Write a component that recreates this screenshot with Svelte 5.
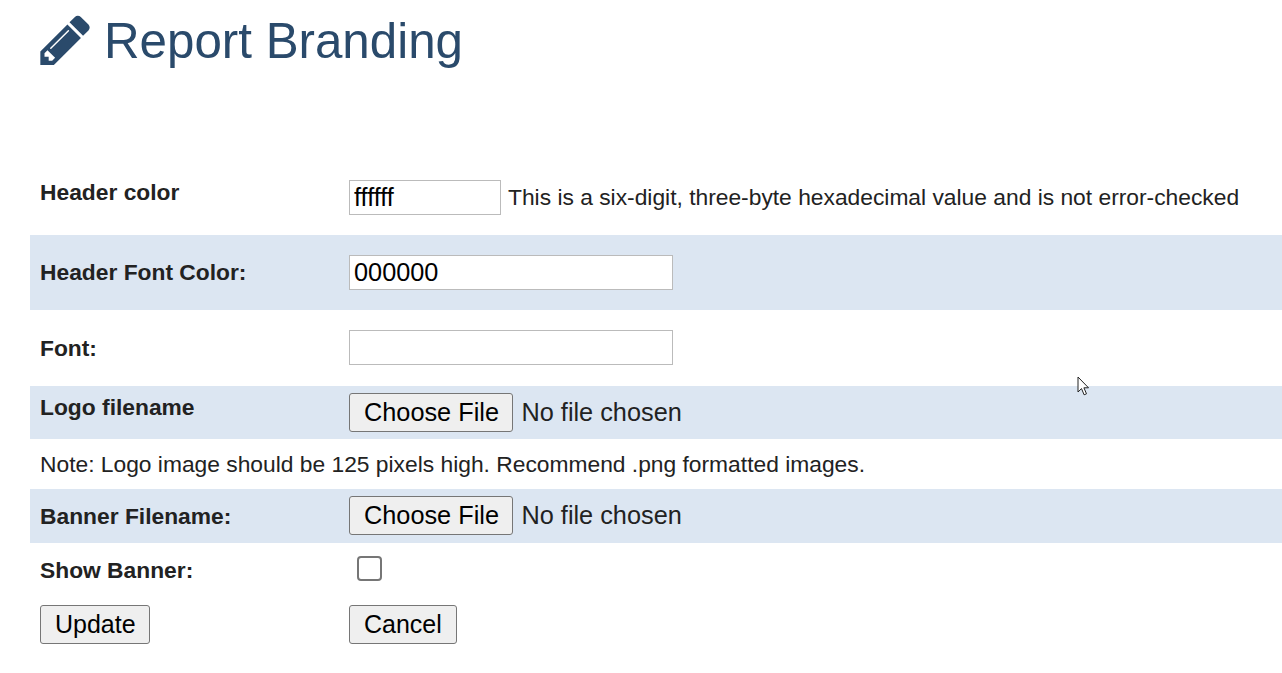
<script>
	let headerColor = $state('ffffff');
	let headerFontColor = $state('000000');
	let font = $state('');
	let showBanner = $state(false);
</script>

<div class="page">
	<h1 class="title">
		<svg class="title-icon" viewBox="128 128 1515 1536" aria-hidden="true">
			<path
				d="M491 1536l91-91-235-235-91 91v107h128v128h107zm523-928q0-22-22-22-10 0-17 7l-542 542q-7 7-7 17 0 22 22 22 10 0 17-7l542-542q7-7 7-17zm-54-192l416 416-832 832h-416v-416zm683 96q0 53-37 90l-166 166-416-416 166-165q36-38 90-38 53 0 91 38l235 234q37 39 37 91z"
			/>
		</svg>
		Report Branding
	</h1>

	<form class="form" onsubmit={(e) => e.preventDefault()}>
		<div class="row row-header">
			<span class="label">Header color</span>
			<div class="value">
				<input class="text short" type="text" bind:value={headerColor} />
				<span class="hint">This is a six-digit, three-byte hexadecimal value and is not error-checked</span>
			</div>
		</div>
		<div class="row row-color shaded centered">
			<span class="label">Header Font Color:</span>
			<div class="value"><input class="text" type="text" bind:value={headerFontColor} /></div>
		</div>
		<div class="row row-font centered">
			<span class="label">Font:</span>
			<div class="value nudge"><input class="text" type="text" bind:value={font} /></div>
		</div>
		<div class="row row-logo shaded">
			<span class="label">Logo filename</span>
			<div class="value"><input class="file" type="file" /></div>
		</div>
		<div class="note">Note: Logo image should be 125 pixels high. Recommend .png formatted images.</div>
		<div class="row row-banner shaded centered">
			<span class="label">Banner Filename:</span>
			<div class="value nudge"><input class="file" type="file" /></div>
		</div>
		<div class="row row-check centered">
			<span class="label">Show Banner:</span>
			<div class="value"><input class="check" type="checkbox" bind:checked={showBanner} /></div>
		</div>
		<div class="row row-actions centered">
			<div class="label"><button class="btn update" type="submit">Update</button></div>
			<div class="value"><button class="btn" type="button">Cancel</button></div>
		</div>
	</form>

	<svg class="pointer" width="14" height="21" viewBox="0 0 14 21" aria-hidden="true">
		<path d="M1 1v15l3.5-3.4 2.6 6.2 2.4-1-2.6-6h4.6z" fill="#fff" stroke="#222" stroke-width="1" />
	</svg>
</div>

<style>
	:global(body) {
		background: #fff;
		font-family: 'Liberation Sans', Arial, sans-serif;
		color: #222;
	}
	.page {
		position: relative;
		padding-left: 30px;
		overflow: hidden;
	}
	.title {
		display: flex;
		align-items: center;
		gap: 14px;
		height: 170px;
		margin: 0;
		padding: 0 0 90px 10px;
		box-sizing: border-box;
		font-size: 49.3px;
		font-weight: 400;
		color: #2a4a6b;
	}
	.title-icon {
		width: 50px;
		height: 50px;
		margin-bottom: 1px;
		fill: #2a4a6b;
	}
	.row {
		display: grid;
		grid-template-columns: 309px 1fr;
		padding-left: 10px;
		box-sizing: border-box;
	}
	.centered {
		align-items: center;
	}
	.shaded {
		background: #dce6f2;
	}
	.row-header {
		height: 65px;
		padding-top: 10px;
		align-items: start;
	}
	.row-color {
		height: 75px;
	}
	.row-font {
		height: 76px;
	}
	.row-logo {
		height: 53px;
		padding-top: 7px;
		align-items: start;
	}
	.row-banner {
		height: 54px;
	}
	.row-check {
		height: 54px;
	}
	.row-actions {
		height: 55px;
	}
	.label {
		font-size: 22.8px;
		font-weight: 700;
	}
	.row-header .label {
		line-height: 25px;
	}
	.row-logo .label {
		line-height: 28px;
	}
	.value {
		display: flex;
		align-items: center;
		gap: 7px;
		font-size: 22.8px;
	}
	.nudge {
		margin-bottom: 1px;
	}
	.text {
		width: 324px;
		height: 35px;
		box-sizing: border-box;
		padding: 1px 4px;
		border: 1px solid #bbb;
		background: #fff;
		font-family: inherit;
		font-size: 25.3px;
		color: #000;
		outline: none;
	}
	.short {
		width: 152px;
	}
	.hint {
		color: #222;
	}
	.note {
		height: 50px;
		padding-left: 10px;
		font-size: 22.8px;
		line-height: 50px;
	}
	.file {
		font-family: inherit;
		font-size: 25.3px;
		color: #222;
	}
	.file::file-selector-button,
	.btn {
		height: 39px;
		padding: 0 14px;
		border: 1px solid #767676;
		border-radius: 3px;
		background: #efefef;
		font-family: inherit;
		font-size: 25px;
		color: #000;
	}
	.file::file-selector-button {
		margin-right: 8px;
		padding: 0 13.5px 0 14px;
		font-size: 25.3px;
	}
	.update {
		padding-right: 13px;
	}
	.check {
		appearance: none;
		width: 25px;
		height: 25px;
		margin: 0 0 3px 8px;
		border: 2px solid #767676;
		border-radius: 4px;
		background: #fff;
	}
	.pointer {
		position: absolute;
		left: 1077px;
		top: 376px;
	}
</style>
